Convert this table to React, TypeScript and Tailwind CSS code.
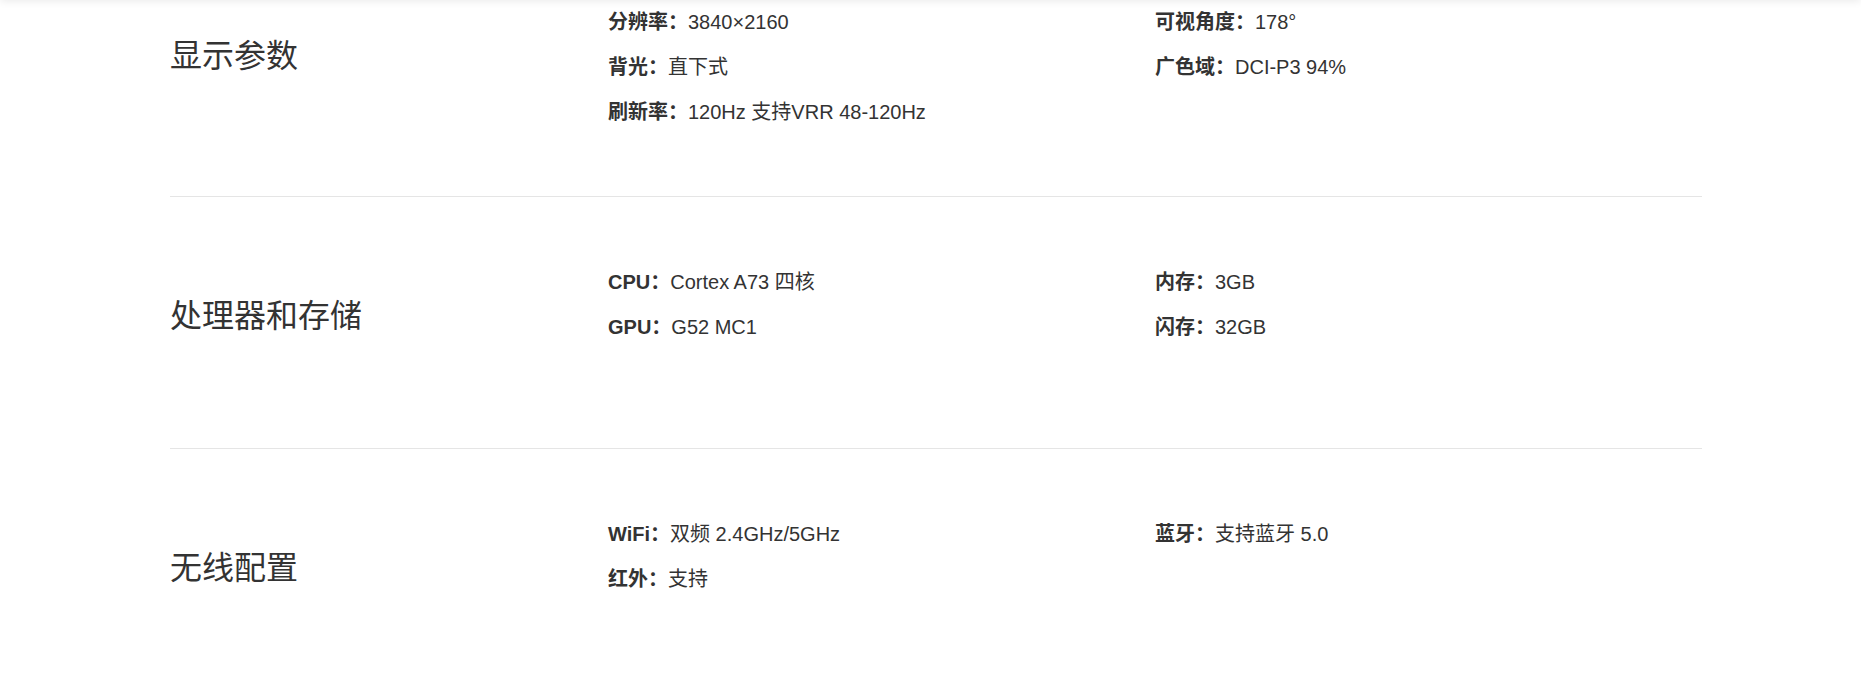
import React from "react";

type Spec = { label: string; value: string };
type Section = { title: string; specs: Spec[] };

const sections: Section[] = [
  {
    title: "显示参数",
    specs: [
      { label: "分辨率：", value: "3840×2160" },
      { label: "可视角度：", value: "178°" },
      { label: "背光：", value: "直下式" },
      { label: "广色域：", value: "DCI-P3 94%" },
      { label: "刷新率：", value: "120Hz 支持VRR 48-120Hz" },
    ],
  },
  {
    title: "处理器和存储",
    specs: [
      { label: "CPU：", value: "Cortex A73 四核" },
      { label: "内存：", value: "3GB" },
      { label: "GPU：", value: "G52 MC1" },
      { label: "闪存：", value: "32GB" },
    ],
  },
  {
    title: "无线配置",
    specs: [
      { label: "WiFi：", value: "双频 2.4GHz/5GHz" },
      { label: "蓝牙：", value: "支持蓝牙 5.0" },
      { label: "红外：", value: "支持" },
    ],
  },
];

export default function App() {
  return (
    <div className="relative min-h-[698px] w-full overflow-hidden bg-white font-['Liberation_Sans','Noto_Sans_CJK_SC',sans-serif] text-[#333]">
      <div className="fixed -top-[10px] left-0 right-0 z-10 h-[10px] bg-white shadow-[0_1px_8px_rgba(0,0,0,0.09)]" />
      <div className="-mt-[63px] ml-[170px] w-[1532px]">
        {sections.map((s) => (
          <div
            key={s.title}
            className="flex min-h-[252px] border-b border-[#e5e5e5]"
          >
            <div className="w-[438px] shrink-0 pt-[95px]">
              <h2 className="text-[32px] font-normal leading-[48px]">{s.title}</h2>
            </div>
            <div className="grid flex-1 grid-cols-2 content-start pt-[62px] pb-[62px]">
              {s.specs.map((sp) => (
                <div key={sp.label} className="flex h-[45px] items-center text-[20px]">
                  <span className="font-bold">{sp.label}</span>
                  <span>{sp.value}</span>
                </div>
              ))}
            </div>
          </div>
        ))}
      </div>
    </div>
  );
}
